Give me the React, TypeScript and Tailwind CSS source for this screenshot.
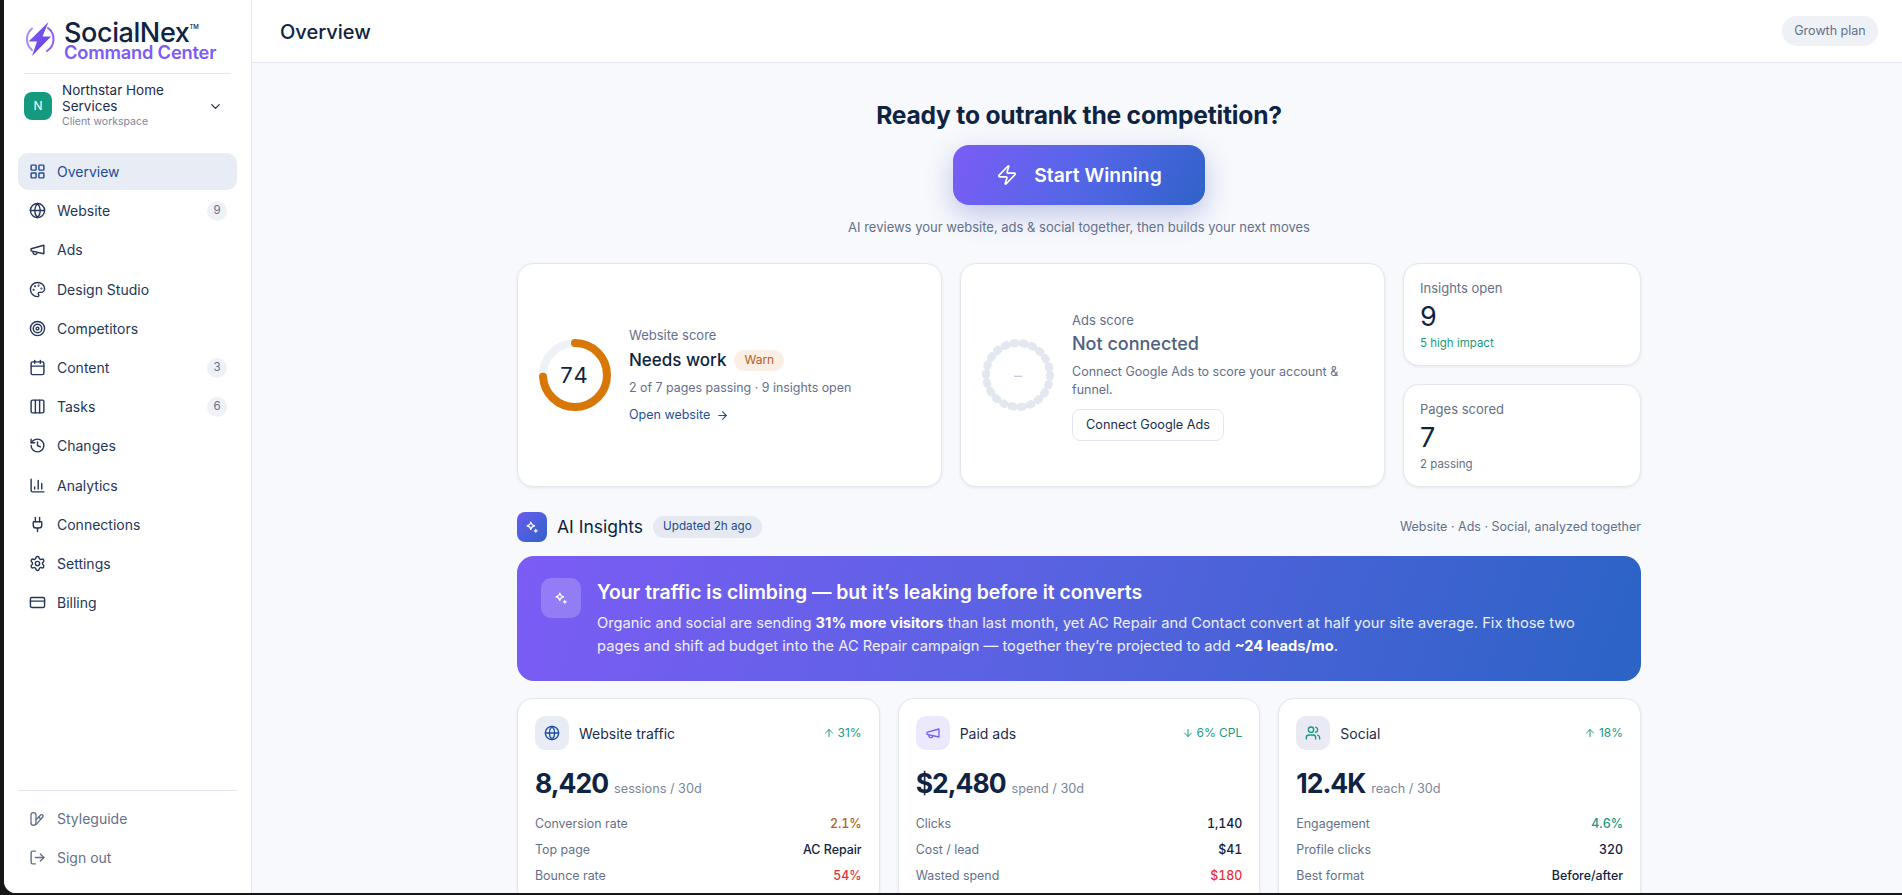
import {
  ArrowDown,
  ArrowRight,
  ArrowUp,
  Calendar,
  ChartColumn,
  ChevronDown,
  Columns3,
  CreditCard,
  Globe,
  History,
  LayoutGrid,
  LogOut,
  Palette,
  Plug,
  Settings,
  Target,
  Users,
  Zap,
} from "lucide-react";
import type { ReactNode } from "react";

function MegaphoneIcon({ className }: { className?: string }) {
  return (
    <svg viewBox="0 0 24 24" fill="none" stroke="currentColor" strokeWidth="2" strokeLinecap="round" strokeLinejoin="round" className={className}>
      <path d="m3 11 18-5v12L3 14v-3z" />
      <path d="M11.6 16.8a3 3 0 1 1-5.8-1.6" />
    </svg>
  );
}

function StyleguideIcon({ className }: { className?: string }) {
  return (
    <svg viewBox="0 0 24 24" fill="none" stroke="currentColor" strokeWidth="2" strokeLinecap="round" strokeLinejoin="round" className={className}>
      <rect x="3" y="2.5" width="7.5" height="19" rx="3.75" />
      <path d="M10.5 13 17.5 6a2 2 0 0 1 3 3L11 20" />
      <path d="m14.5 9 3 3" />
    </svg>
  );
}

function SparkIcon({ className }: { className?: string }) {
  return (
    <svg viewBox="0 0 24 24" fill="none" stroke="currentColor" strokeWidth="2" strokeLinecap="round" strokeLinejoin="round" className={className}>
      <path d="M10 3.5c.6 4.2 2.2 5.9 6.5 6.5-4.3.6-5.9 2.3-6.5 6.5-.6-4.2-2.2-5.9-6.5-6.5 4.3-.6 5.9-2.3 6.5-6.5Z" />
      <path d="M18.5 16v5M16 18.5h5" />
    </svg>
  );
}

function Logo() {
  return (
    <svg viewBox="0 0 32 36" className="h-[36px] w-[32px] shrink-0" fill="none">
      <defs>
        <linearGradient id="logoBolt" x1="0" y1="0" x2="1" y2="1">
          <stop offset="0" stopColor="#8b5cf6" />
          <stop offset="1" stopColor="#5b3fe0" />
        </linearGradient>
      </defs>
      <path d="M8 7.5A14 14 0 0 0 8 29" stroke="#a78bfa" strokeWidth="2" strokeLinecap="round" />
      <path d="M24 7A14 14 0 0 1 23 30" stroke="#8b5cf6" strokeWidth="2" strokeLinecap="round" />
      <path d="M24.5 1 4.5 20.5H13L8 35l19-19.5h-8.5L24.5 1Z" fill="url(#logoBolt)" />
    </svg>
  );
}

const navItems = [
  { label: "Overview", icon: <LayoutGrid className="size-[17px]" />, active: true },
  { label: "Website", icon: <Globe className="size-[17px]" />, badge: "9" },
  { label: "Ads", icon: <MegaphoneIcon className="size-[17px]" /> },
  { label: "Design Studio", icon: <Palette className="size-[17px]" /> },
  { label: "Competitors", icon: <Target className="size-[17px]" /> },
  { label: "Content", icon: <Calendar className="size-[17px]" />, badge: "3" },
  { label: "Tasks", icon: <Columns3 className="size-[17px]" />, badge: "6" },
  { label: "Changes", icon: <History className="size-[17px]" /> },
  { label: "Analytics", icon: <ChartColumn className="size-[17px]" /> },
  { label: "Connections", icon: <Plug className="size-[17px]" /> },
  { label: "Settings", icon: <Settings className="size-[17px]" /> },
  { label: "Billing", icon: <CreditCard className="size-[17px]" /> },
];

function Sidebar() {
  return (
    <aside className="flex w-[248px] shrink-0 flex-col border-r border-[#e3e8f0] bg-white">
      <div className="mx-[20px] flex h-[74px] items-start gap-[8px] border-b border-[#e3e8f0] pt-[21px]">
        <Logo />
        <div className="min-w-0">
          <div className="flex items-start text-[27px] leading-[23px] font-medium tracking-[-0.4px] text-[#0f2342]">
            SocialNex<span className="mt-[2px] text-[6px] leading-[8px] tracking-normal">TM</span>
          </div>
          <div className="text-[18.3px] leading-[17px] font-semibold tracking-[-0.2px] text-[#7c5cf5]">Command Center</div>
        </div>
      </div>

      <div className="mx-[20px] mt-[8px] flex items-center">
        <div className="flex size-[28px] shrink-0 items-center justify-center rounded-[8px] bg-[#159a80] text-[12px] font-normal text-white">N</div>
        <div className="ml-[10px] w-[130px]">
          <div className="text-[13.5px] leading-[16px] font-normal text-[#1c2c4c]">Northstar Home Services</div>
          <div className="text-[10.5px] leading-[16px] text-[#7b869c]">Client workspace</div>
        </div>
        <ChevronDown className="ml-[16px] size-[15px] text-[#1c2c4c]" />
      </div>

      <nav className="mx-[14px] mt-[23px] flex flex-col gap-[2px]">
        {navItems.map((item) => (
          <div
            key={item.label}
            className={
              item.active
                ? "flex h-[37.2px] items-center gap-[11px] rounded-[10px] bg-[#e8edf5] pr-[10px] pl-[11px] text-[14px] font-normal text-[#1e4a96]"
                : "flex h-[37.2px] items-center gap-[11px] rounded-[10px] pr-[10px] pl-[11px] text-[14px] font-normal text-[#25365a]"
            }
          >
            {item.icon}
            <span className="flex-1">{item.label}</span>
            {item.badge && (
              <span className="flex size-[20px] items-center justify-center rounded-full bg-[#eef1f6] text-[11.5px] text-[#64708a]">{item.badge}</span>
            )}
          </div>
        ))}
      </nav>

      <div className="mx-[14px] mt-auto flex flex-col gap-[2px] border-t border-[#e3e8f0] pt-[9px] pb-[17px] text-[14px] text-[#64708a]">
        <div className="flex h-[37px] items-center gap-[12px] pl-[11px]">
          <StyleguideIcon className="size-[16px]" />
          Styleguide
        </div>
        <div className="flex h-[37px] items-center gap-[11px] pl-[11px]">
          <LogOut className="size-[17px]" />
          Sign out
        </div>
      </div>
    </aside>
  );
}

function Ring({ dashed }: { dashed?: boolean }) {
  const r = 32;
  const circ = 2 * Math.PI * r;
  return (
    <svg viewBox="0 0 72 72" className="size-[72px]" fill="none">
      {dashed ? (
        <circle cx="36" cy="36" r={r} stroke="#e3e8f0" strokeWidth="8" strokeLinecap="round" strokeDasharray="1.5 7.64" />
      ) : (
        <>
          <circle cx="36" cy="36" r={r} stroke="#eef1f6" strokeWidth="8" />
          <circle
            cx="36"
            cy="36"
            r={r}
            stroke="#d97706"
            strokeWidth="8"
            strokeLinecap="round"
            strokeDasharray={`${circ * 0.74} ${circ}`}
            transform="rotate(-90 36 36)"
          />
        </>
      )}
    </svg>
  );
}

function ScoreCard({ ring, center, children }: { ring: ReactNode; center: ReactNode; children: ReactNode }) {
  return (
    <div className="row-span-2 flex items-center gap-[18px] rounded-[16px] border border-[#e3e8f0] bg-white pr-[16px] pl-[21px] shadow-[0_1px_3px_rgba(15,35,66,0.08)]">
      <div className="relative size-[72px] shrink-0">
        {ring}
        <div className="absolute inset-0 flex items-center justify-center">{center}</div>
      </div>
      <div className="min-w-0 flex-1">{children}</div>
    </div>
  );
}

function MiniStat({ label, value, note, noteClass }: { label: string; value: string; note: string; noteClass: string }) {
  return (
    <div className="rounded-[16px] border border-[#e3e8f0] bg-white px-[16px] pt-[14px] shadow-[0_1px_3px_rgba(15,35,66,0.08)]">
      <div className="text-[13px] leading-[20px] text-[#64708a]">{label}</div>
      <div className="mt-[2px] text-[27px] leading-[34px] font-normal text-[#0f2342]">{value}</div>
      <div className={`text-[11.5px] leading-[18px] ${noteClass}`}>{note}</div>
    </div>
  );
}

type Row = { label: string; value: string; valueClass: string };

const channels: {
  title: string;
  icon: ReactNode;
  iconBox: string;
  delta: ReactNode;
  big: string;
  sub: string;
  rows: Row[];
}[] = [
  {
    title: "Website traffic",
    icon: <Globe className="size-[16px] text-[#1e4fa3]" />,
    iconBox: "bg-[#e8edf5]",
    delta: (
      <>
        <ArrowUp className="size-[12px]" />
        31%
      </>
    ),
    big: "8,420",
    sub: "sessions / 30d",
    rows: [
      { label: "Conversion rate", value: "2.1%", valueClass: "text-[#b45f1e]" },
      { label: "Top page", value: "AC Repair", valueClass: "text-[#0f2342]" },
      { label: "Bounce rate", value: "54%", valueClass: "text-[#e5343d]" },
    ],
  },
  {
    title: "Paid ads",
    icon: <MegaphoneIcon className="size-[16px] text-[#7c5cf5]" />,
    iconBox: "bg-[#ece9fd]",
    delta: (
      <>
        <ArrowDown className="size-[12px]" />
        6% CPL
      </>
    ),
    big: "$2,480",
    sub: "spend / 30d",
    rows: [
      { label: "Clicks", value: "1,140", valueClass: "text-[#0f2342]" },
      { label: "Cost / lead", value: "$41", valueClass: "text-[#0f2342]" },
      { label: "Wasted spend", value: "$180", valueClass: "text-[#e5343d]" },
    ],
  },
  {
    title: "Social",
    icon: <Users className="size-[16px] text-[#159a80]" />,
    iconBox: "bg-[#e9eaf3]",
    delta: (
      <>
        <ArrowUp className="size-[12px]" />
        18%
      </>
    ),
    big: "12.4K",
    sub: "reach / 30d",
    rows: [
      { label: "Engagement", value: "4.6%", valueClass: "text-[#159a80]" },
      { label: "Profile clicks", value: "320", valueClass: "text-[#0f2342]" },
      { label: "Best format", value: "Before/after", valueClass: "text-[#0f2342]" },
    ],
  },
];

function ChannelCard({ c }: { c: (typeof channels)[number] }) {
  return (
    <div className="rounded-[16px] border border-[#e3e8f0] bg-white p-[17px] shadow-[0_1px_3px_rgba(15,35,66,0.08)]">
      <div className="flex items-center">
        <div className={`flex size-[34px] items-center justify-center rounded-[10px] ${c.iconBox}`}>{c.icon}</div>
        <div className="ml-[10px] flex-1 text-[14px] font-normal text-[#1c2c4c]">{c.title}</div>
        <div className="flex items-center gap-[3px] text-[12px] text-[#1d9a7c]">{c.delta}</div>
      </div>
      <div className="mt-[15px] flex items-baseline gap-[6px]">
        <span className="text-[26.5px] leading-[36px] font-bold tracking-[-1px] text-[#0f2342]">{c.big}</span>
        <span className="text-[12.7px] text-[#7b869c]">{c.sub}</span>
      </div>
      <div className="mt-[10px] flex flex-col">
        {c.rows.map((r) => (
          <div key={r.label} className="flex h-[26px] items-center justify-between text-[12.4px]">
            <span className="text-[#64708a]">{r.label}</span>
            <span className={`font-medium tabular-nums ${r.valueClass}`}>{r.value}</span>
          </div>
        ))}
      </div>
    </div>
  );
}

function Overview() {
  return (
    <div className="ml-[265px] w-[1124px] pt-[36px]">
      <div className="flex flex-col items-center">
        <h2 className="text-[24.6px] leading-[33px] font-bold tracking-[-0.2px] text-[#0f2342]">Ready to outrank the competition?</h2>
        <button className="mt-[13px] flex h-[60px] w-[252px] items-center justify-center gap-[16px] rounded-[16px] bg-[linear-gradient(120deg,#7c5cf5,#5566e8_50%,#2f62c8)] text-[19.3px] font-semibold text-white shadow-[0_10px_28px_rgba(60,80,190,0.3)]">
          <Zap className="size-[22px]" strokeWidth={1.75} />
          Start Winning
        </button>
        <p className="mt-[12px] text-[13px] leading-[20px] text-[#64708a]">AI reviews your website, ads &amp; social together, then builds your next moves</p>
      </div>

      <div className="mt-[26px] grid h-[224px] grid-cols-[425px_425px_1fr] grid-rows-2 gap-[18px]">
        <ScoreCard ring={<Ring />} center={<span className="text-[22px] font-normal tracking-[2px] text-[#0f2342]">74</span>}>
          <div className="text-[13px] leading-[20px] text-[#64708a]">Website score</div>
          <div className="mt-[2px] flex items-center gap-[8px]">
            <span className="text-[17px] leading-[26px] font-medium text-[#0f2342]">Needs work</span>
            <span className="flex h-[21px] items-center rounded-full bg-[#fbeee4] px-[10px] text-[12px] text-[#b45f1e]">Warn</span>
          </div>
          <div className="mt-[5px] text-[12.4px] leading-[20px] text-[#64708a]">2 of 7 pages passing · 9 insights open</div>
          <div className="mt-[7px] flex items-center gap-[6px] text-[12.5px] leading-[20px] font-normal text-[#1e4fa3]">
            Open website <ArrowRight className="size-[13px]" />
          </div>
        </ScoreCard>

        <ScoreCard ring={<Ring dashed />} center={<span className="text-[16px] text-[#c3ccda]">–</span>}>
          <div className="text-[13px] leading-[20px] text-[#64708a]">Ads score</div>
          <div className="mt-[1px] text-[18px] leading-[26px] font-medium text-[#4f6180]">Not connected</div>
          <div className="mt-[6px] text-[12.5px] leading-[18px] text-[#64708a]">Connect Google Ads to score your account &amp; funnel.</div>
          <button className="mt-[10px] h-[32px] w-[152px] rounded-[8px] border border-[#e3e8f0] bg-white text-[12.7px] font-normal text-[#1c2c4c]">Connect Google Ads</button>
        </ScoreCard>

        <MiniStat label="Insights open" value="9" note="5 high impact" noteClass="text-[#1d9a7c]" />
        <MiniStat label="Pages scored" value="7" note="2 passing" noteClass="text-[#64708a]" />
      </div>

      <div className="mt-[25px] flex h-[30px] items-center">
        <div className="flex size-[30px] items-center justify-center rounded-[8px] bg-[linear-gradient(135deg,#6a5cf0,#2f62c8)] text-white">
          <SparkIcon className="size-[14px]" />
        </div>
        <span className="ml-[10px] mt-[1px] text-[17.5px] font-normal text-[#0f2342]">AI Insights</span>
        <span className="ml-[10px] flex h-[22px] items-center rounded-full bg-[#e4e9f2] px-[10px] text-[11.7px] font-normal text-[#1e4a8a]">Updated 2h ago</span>
        <span className="ml-auto text-[12.5px] text-[#64708a]">Website · Ads · Social, analyzed together</span>
      </div>

      <div className="mt-[14px] flex h-[125px] gap-[16px] rounded-[17px] bg-[linear-gradient(110deg,#7c5cf5,#5a62e2_45%,#2b63c4)] px-[24px] pt-[22px] text-white">
        <div className="flex size-[40px] shrink-0 items-center justify-center rounded-[10px] bg-white/20">
          <SparkIcon className="size-[14px]" />
        </div>
        <div className="min-w-0">
          <div className="text-[19.4px] leading-[28px] font-semibold">Your traffic is climbing — but it’s leaking before it converts</div>
          <p className="mt-[6px] max-w-[985px] text-[14.7px] leading-[23px] text-white/90">
            Organic and social are sending <b className="font-bold text-white">31% more visitors</b> than last month, yet AC Repair and Contact convert at half your site average. Fix those two pages and shift ad budget into the AC Repair campaign — together they’re projected to add <b className="font-bold text-white">~24 leads/mo</b>.
          </p>
        </div>
      </div>

      <div className="mt-[17px] grid grid-cols-3 gap-[18px]">
        {channels.map((c) => (
          <ChannelCard key={c.title} c={c} />
        ))}
      </div>
    </div>
  );
}

export default function App() {
  return (
    <div className="h-screen overflow-hidden bg-[#161616] pb-[2px] pl-[4px] font-['Inter',sans-serif]">
      <div className="flex h-full overflow-hidden rounded-bl-[12px] bg-[#f7f9fc]">
        <Sidebar />
        <main className="min-w-0 flex-1 overflow-hidden">
          <header className="flex h-[63px] items-center justify-between border-b border-[#e3e8f0] bg-white pr-[24px] pl-[28px]">
            <h1 className="mt-[2px] text-[20px] font-medium text-[#0f2342]">Overview</h1>
            <span className="flex h-[30px] w-[96px] items-center justify-center rounded-full bg-[#eef1f6] text-[12.5px] text-[#64708a]">Growth plan</span>
          </header>
          <Overview />
        </main>
      </div>
    </div>
  );
}
